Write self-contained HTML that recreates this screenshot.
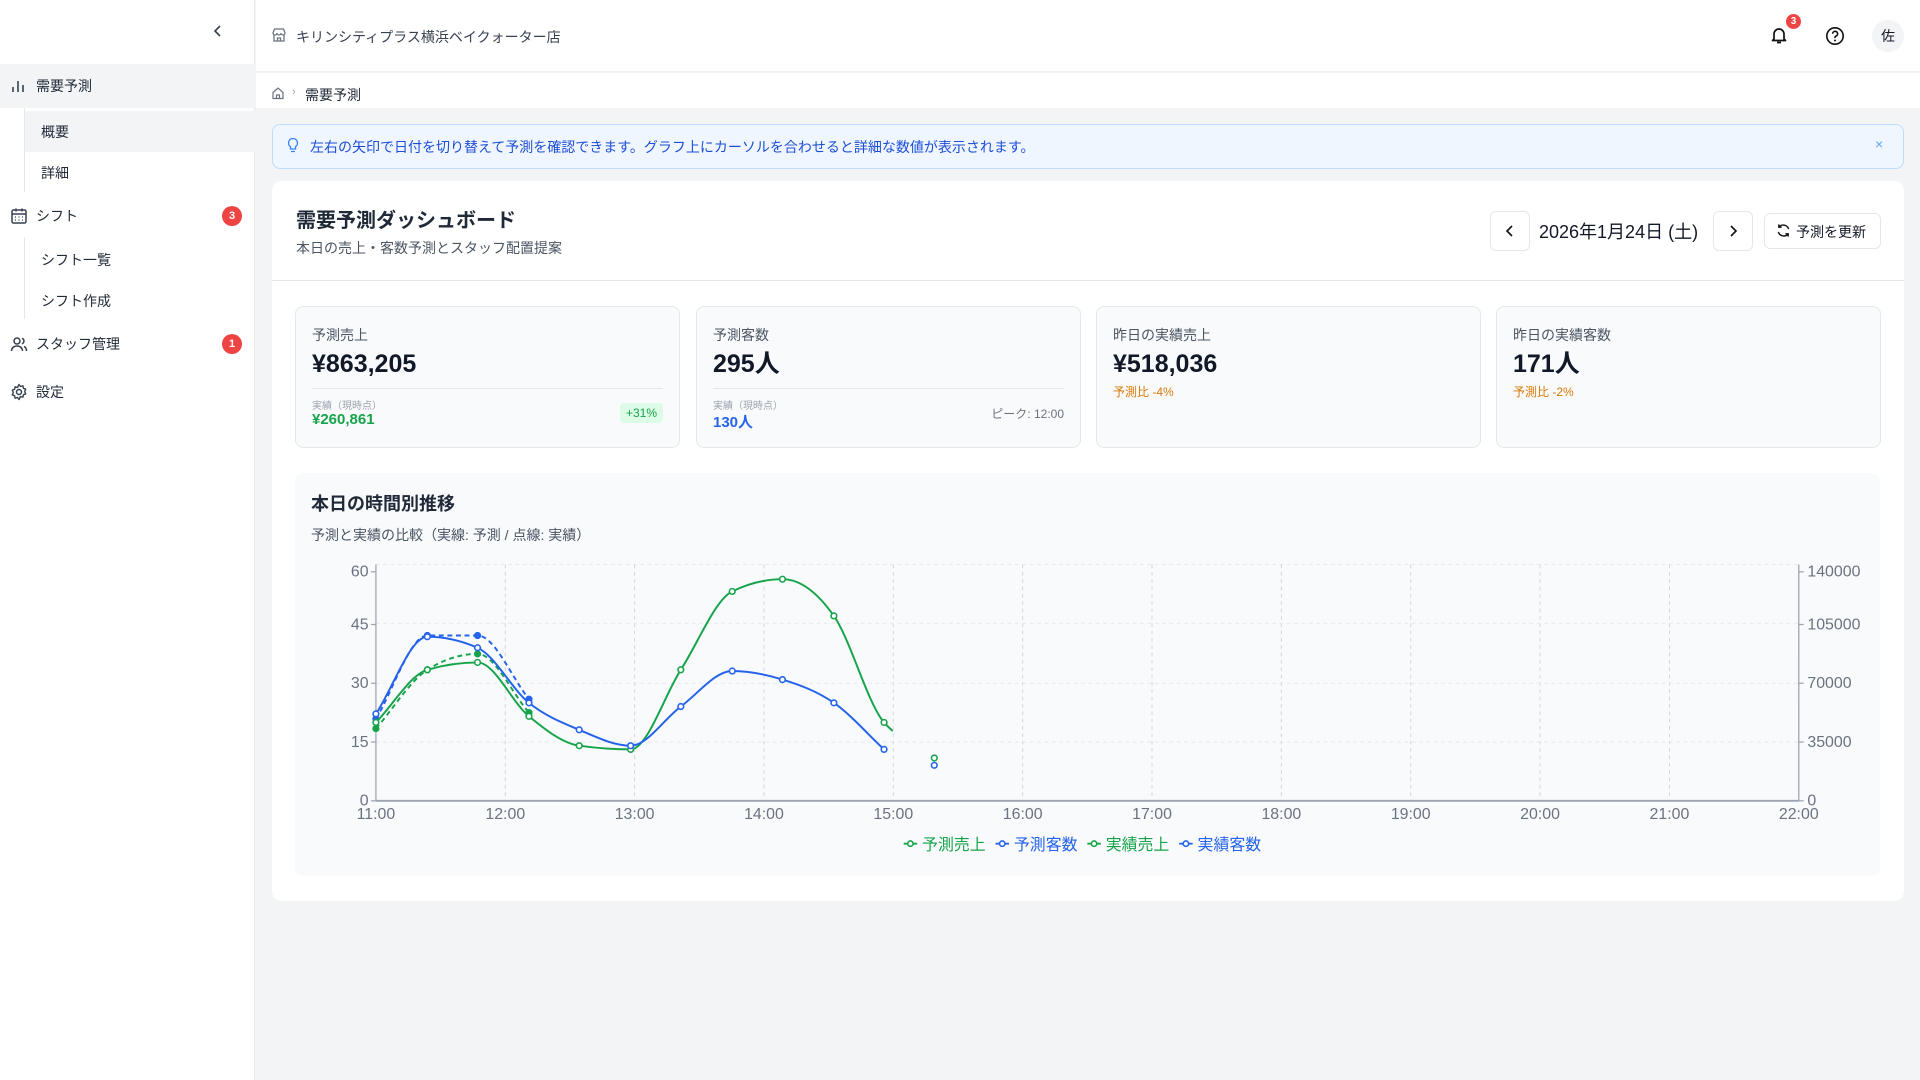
<!DOCTYPE html>
<html><head><meta charset="utf-8">
<style>
*{box-sizing:border-box;margin:0;padding:0}
body{width:1920px;height:1080px;overflow:hidden;background:#f3f4f6;font-family:"Liberation Sans","Noto Sans CJK JP",sans-serif;color:#111827;position:relative}
.abs{position:absolute}
.side{left:0;top:0;width:255px;height:1080px;background:#fff;border-right:1px solid #e5e7eb}
.nav{position:absolute;left:0;width:255px;font-size:14px;color:#1f2937;display:flex;align-items:center}
.nav svg{position:absolute;left:10px}
.nav span{position:absolute;left:36px}
.sub{position:absolute;left:25px;width:230px;font-size:14px;color:#1f2937;display:flex;align-items:center;padding-left:16px}
.badge{position:absolute;left:222px;width:20px;height:20px;border-radius:50%;background:#ef4444;color:#fff;font-size:11px;font-weight:bold;display:flex;align-items:center;justify-content:center}
.stat{position:absolute;top:306px;height:142px;width:385px;background:#f9fafb;border:1px solid #e5e7eb;border-radius:8px;padding:0 16px}
.stat .l{position:absolute;top:18px;left:16px;font-size:14px;color:#4b5563}
.stat .v{position:absolute;top:41px;left:16px;font-size:25px;line-height:32px;font-weight:bold;color:#111827}
.stat .hr{position:absolute;left:16px;right:16px;top:81px;border-top:1px solid #e5e7eb}
.stat .s{position:absolute;top:90px;left:16px;font-size:10px;color:#9ca3af}
.stat .sv{position:absolute;top:104px;left:16px;font-size:15px;font-weight:bold}
.stat .o{position:absolute;top:76px;left:16px;font-size:12px;color:#d97706}
</style></head><body>
<div class="abs side"></div>
<svg class="abs" style="left:210px;top:23px" width="16" height="16" viewBox="0 0 16 16"><path d="M10 3 L5 8 L10 13" fill="none" stroke="#374151" stroke-width="1.6"/></svg>
<div class="nav" style="top:64px;height:44px;background:#f3f4f6">
<svg width="16" height="16" viewBox="0 0 16 16"><path d="M3 14V9M8 14V3M13 14V7" stroke="#374151" stroke-width="1.6" fill="none"/></svg><span>需要予測</span></div>
<div style="position:absolute;left:24px;top:108px;width:1px;height:84px;background:#e5e7eb"></div>
<div class="sub" style="top:111px;height:41px;background:#f3f4f6">概要</div>
<div class="sub" style="top:152px;height:41px">詳細</div>
<div class="nav" style="top:196px;height:40px">
<svg width="18" height="18" viewBox="0 0 18 18"><rect x="2" y="3" width="14" height="13" rx="1.5" fill="none" stroke="#374151" stroke-width="1.5"/><path d="M2 7H16M6 1.5V4.5M12 1.5V4.5" stroke="#374151" stroke-width="1.5"/><path d="M5 10h1M8.5 10h1M12 10h1M5 13h1M8.5 13h1M12 13h1" stroke="#374151" stroke-width="1.2"/></svg><span>シフト</span><div class="badge" style="top:10px">3</div></div>
<div style="position:absolute;left:24px;top:237px;width:1px;height:82px;background:#e5e7eb"></div>
<div class="sub" style="top:239px;height:41px">シフト一覧</div>
<div class="sub" style="top:280px;height:41px">シフト作成</div>
<div class="nav" style="top:324px;height:40px">
<svg width="18" height="18" viewBox="0 0 18 18"><circle cx="7" cy="6" r="3" fill="none" stroke="#374151" stroke-width="1.5"/><path d="M1.5 16c0-3 2.5-5 5.5-5s5.5 2 5.5 5M12 3.2a3 3 0 0 1 0 5.6M14 11.5c1.5.6 2.5 2.3 2.5 4.5" fill="none" stroke="#374151" stroke-width="1.5"/></svg><span>スタッフ管理</span><div class="badge" style="top:10px">1</div></div>
<div class="nav" style="top:372px;height:40px">
<svg width="18" height="18" viewBox="0 0 18 18"><circle cx="9" cy="9" r="2.5" fill="none" stroke="#374151" stroke-width="1.5"/><path d="M9 1.5l1.5 2 2.4-.7.5 2.4 2.3 1-1 2.3 1 2.3-2.3 1-.5 2.4-2.4-.7L9 16.5l-1.5-2-2.4.7-.5-2.4-2.3-1 1-2.3-1-2.3 2.3-1 .5-2.4 2.4.7z" fill="none" stroke="#374151" stroke-width="1.4" stroke-linejoin="round"/></svg><span>設定</span></div>

<div class="abs" style="left:256px;top:0;width:1664px;height:72px;background:#fff;border-bottom:1px solid #f0f1f3"></div>
<svg class="abs" style="left:271px;top:27px" width="16" height="16" viewBox="0 0 16 16"><path d="M2 6L3.5 2h9L14 6c0 1.2-1 2-2 2s-2-.8-2-2c0 1.2-1 2-2 2s-2-.8-2-2c0 1.2-1 2-2 2S2 7.2 2 6zM3 8v6h10V8M6.5 14v-3h3v3" fill="none" stroke="#6b7280" stroke-width="1.3"/></svg>
<div class="abs" style="left:296px;top:27px;font-size:14px;color:#374151">キリンシティプラス横浜ベイクォーター店</div>
<svg class="abs" style="left:1769px;top:25px" width="20" height="20" viewBox="0 0 20 20"><path d="M5 14V9a5 5 0 0 1 10 0v5l1.5 1.5h-13zM8 17.5h4" fill="none" stroke="#111" stroke-width="1.7" stroke-linejoin="round"/></svg>
<div class="abs" style="left:1786px;top:14px;width:15px;height:15px;border-radius:50%;background:#ef4444;color:#fff;font-size:10px;font-weight:bold;display:flex;align-items:center;justify-content:center">3</div>
<svg class="abs" style="left:1825px;top:26px" width="20" height="20" viewBox="0 0 20 20"><circle cx="10" cy="10" r="8.2" fill="none" stroke="#111" stroke-width="1.6"/><path d="M7.6 7.8a2.5 2.5 0 1 1 3.2 2.4c-.6.2-.8.7-.8 1.3v.6" fill="none" stroke="#111" stroke-width="1.6"/><circle cx="10" cy="14.5" r="1" fill="#111"/></svg>
<div class="abs" style="left:1872px;top:20px;width:32px;height:32px;border-radius:50%;background:#f3f4f6;font-size:14px;display:flex;align-items:center;justify-content:center">佐</div>

<div class="abs" style="left:256px;top:73px;width:1664px;height:35px;background:#fff"></div>
<svg class="abs" style="left:271px;top:86px" width="14" height="14" viewBox="0 0 14 14"><path d="M2 6.5L7 2l5 4.5V12.5H2zM5.5 12.5V9h3v3.5" fill="none" stroke="#6b7280" stroke-width="1.2"/></svg>
<div class="abs" style="left:292px;top:86px;font-size:11px;color:#9ca3af">›</div>
<div class="abs" style="left:305px;top:85px;font-size:14px;color:#1f2937">需要予測</div>

<div class="abs" style="left:272px;top:124px;width:1632px;height:45px;background:#eff6ff;border:1px solid #bfdbfe;border-radius:8px"></div>
<svg class="abs" style="left:286px;top:137px" width="14" height="18" viewBox="0 0 14 18"><path d="M7 1.5a4.5 4.5 0 0 0-2.5 8.2V12h5V9.7A4.5 4.5 0 0 0 7 1.5zM5 14.5h4" fill="none" stroke="#3b82f6" stroke-width="1.3"/></svg>
<div class="abs" style="left:310px;top:137px;font-size:14px;color:#1d4ed8">左右の矢印で日付を切り替えて予測を確認できます。グラフ上にカーソルを合わせると詳細な数値が表示されます。</div>
<div class="abs" style="left:1875px;top:136px;font-size:14px;color:#60a5fa">×</div>

<div class="abs" style="left:272px;top:181px;width:1632px;height:720px;background:#fff;border-radius:10px"></div>
<div class="abs" style="left:272px;top:280px;width:1632px;border-top:1px solid #e5e7eb"></div>
<div class="abs" style="left:296px;top:204px;font-size:20px;font-weight:bold;color:#1f2937">需要予測ダッシュボード</div>
<div class="abs" style="left:296px;top:238px;font-size:14px;color:#4b5563">本日の売上・客数予測とスタッフ配置提案</div>
<div class="abs" style="left:1490px;top:211px;width:40px;height:40px;border:1px solid #e5e7eb;border-radius:6px;background:#fff"></div>
<svg class="abs" style="left:1503px;top:223px" width="14" height="16" viewBox="0 0 14 16"><path d="M9 3L4 8l5 5" fill="none" stroke="#111" stroke-width="1.6"/></svg>
<div class="abs" style="left:1539px;top:218px;font-size:18px;color:#111827">2026年1月24日 (土)</div>
<div class="abs" style="left:1713px;top:211px;width:40px;height:40px;border:1px solid #e5e7eb;border-radius:6px;background:#fff"></div>
<svg class="abs" style="left:1726px;top:223px" width="14" height="16" viewBox="0 0 14 16"><path d="M5 3l5 5-5 5" fill="none" stroke="#111" stroke-width="1.6"/></svg>
<div class="abs" style="left:1764px;top:213px;width:117px;height:36px;border:1px solid #e5e7eb;border-radius:6px;background:#fff"></div>
<svg class="abs" style="left:1776px;top:223px" width="15" height="15" viewBox="0 0 16 16"><path d="M13.5 6.5A6 6 0 0 0 3 4.5M2.5 9.5A6 6 0 0 0 13 11.5M3 1.5v3h3M13 14.5v-3h-3" fill="none" stroke="#111" stroke-width="1.5"/></svg>
<div class="abs" style="left:1796px;top:222px;font-size:14px;color:#111827">予測を更新</div>

<div class="stat" style="left:295px"><div class="l">予測売上</div><div class="v">¥863,205</div><div class="hr"></div><div class="s">実績（現時点）</div><div class="sv" style="color:#16a34a">¥260,861</div><div class="abs" style="right:16px;top:96px;background:#dcfce7;color:#16a34a;font-size:12px;padding:3px 6px;border-radius:4px">+31%</div></div>
<div class="stat" style="left:696px"><div class="l">予測客数</div><div class="v">295人</div><div class="hr"></div><div class="s">実績（現時点）</div><div class="sv" style="color:#2563eb">130人</div><div class="abs" style="right:16px;top:98px;color:#6b7280;font-size:12px">ピーク: 12:00</div></div>
<div class="stat" style="left:1096px"><div class="l">昨日の実績売上</div><div class="v">¥518,036</div><div class="o" style="top:76px">予測比 -4%</div></div>
<div class="stat" style="left:1496px"><div class="l">昨日の実績客数</div><div class="v">171人</div><div class="o" style="top:76px">予測比 -2%</div></div>

<div class="abs" style="left:295px;top:473px;width:1585px;height:403px;background:#f8fafc;border-radius:8px"></div>
<div class="abs" style="left:311px;top:490px;font-size:18px;font-weight:bold;color:#1f2937">本日の時間別推移</div>
<div class="abs" style="left:311px;top:525px;font-size:14px;color:#4b5563">予測と実績の比較（実線: 予測 / 点線: 実績）</div>

<svg id="ch" class="abs" style="left:0;top:0" width="1920" height="1080" viewBox="0 0 1568 882" font-family="Liberation Sans, sans-serif"></svg>
<script>
var s='';
var L=307,R=1469,T=461,B=654,H=(R-L)/11;
for(var i=1;i<=11;i++){var x=L+i*H;s+='<line x1="'+x+'" y1="'+T+'" x2="'+x+'" y2="'+B+'" stroke="#d1d5db" stroke-dasharray="3 3" stroke-width="0.8"/>';}
[461,509,558,606].forEach(function(y){s+='<line x1="'+L+'" y1="'+y+'" x2="'+R+'" y2="'+y+'" stroke="#e5e7eb" stroke-dasharray="3 3" stroke-width="0.8"/>';});
s+='<line x1="'+L+'" y1="'+T+'" x2="'+L+'" y2="'+B+'" stroke="#9ca3af"/><line x1="'+R+'" y1="'+T+'" x2="'+R+'" y2="'+B+'" stroke="#9ca3af"/><line x1="'+L+'" y1="'+B+'" x2="'+R+'" y2="'+B+'" stroke="#9ca3af" stroke-width="1.5"/>';
var ly=[[60,467],[45,510],[30,558],[15,606],[0,654]],ry=['140000','105000','70000','35000','0'];
ly.forEach(function(a,k){s+='<text x="301" y="'+(a[1]+4)+'" text-anchor="end" font-size="13" fill="#6b7280">'+a[0]+'</text>';s+='<text x="1476" y="'+(a[1]+4)+'" font-size="13" fill="#6b7280">'+ry[k]+'</text>';s+='<line x1="303" x2="307" y1="'+a[1]+'" y2="'+a[1]+'" stroke="#9ca3af"/><line x1="1469" x2="1473" y1="'+a[1]+'" y2="'+a[1]+'" stroke="#9ca3af"/>';});
for(var i=0;i<=11;i++){var x=L+i*H;s+='<text x="'+x+'" y="669" text-anchor="middle" font-size="13" fill="#6b7280">'+(11+i)+':00</text>';}
function path(p){var n=p.length,m=[],d=[];for(var i=0;i<n-1;i++)d.push((p[i+1][1]-p[i][1])/(p[i+1][0]-p[i][0]));
for(var i=0;i<n;i++){if(i==0)m.push(d[0]);else if(i==n-1)m.push(d[n-2]);else{if(d[i-1]*d[i]<=0)m.push(0);else{var h0=p[i][0]-p[i-1][0],h1=p[i+1][0]-p[i][0];var t=(d[i-1]*h1+d[i]*h0)/(h0+h1);var sg=Math.min(Math.abs(d[i-1]),Math.abs(d[i]),0.5*Math.abs(t))*2;m.push(Math.sign(t)*Math.min(Math.abs(t),sg));}}}
var r='M'+p[0][0]+','+p[0][1];for(var i=0;i<n-1;i++){var h=(p[i+1][0]-p[i][0])/3;r+=' C'+(p[i][0]+h)+','+(p[i][1]+m[i]*h)+' '+(p[i+1][0]-h)+','+(p[i+1][1]-m[i+1]*h)+' '+p[i+1][0]+','+p[i+1][1];}return r;}
function ser(p,c,dash,fill,n){s+='<path d="'+path(p)+'" fill="none" stroke="'+c+'" stroke-width="1.6"'+(dash?' stroke-dasharray="4 3"':'')+'/>';p.slice(0,n||p.length).forEach(function(q){s+='<circle cx="'+q[0]+'" cy="'+q[1]+'" r="2.3" fill="'+(fill?c:'#fff')+'" stroke="'+c+'" stroke-width="1.3"/>';});}
var G='#16a34a',Bl='#2563eb';
ser([[307,595],[349,547],[390,534],[432,582]],G,true,true);
ser([[307,587],[349,519],[390,519],[432,571]],Bl,true,true);
ser([[307,590],[349,547],[390,541],[432,585],[473,609],[515,612],[556,547],[598,483],[639,473],[681,503],[722,590],[729,597]],G,false,false,11);
ser([[307,583],[349,520],[390,529],[432,574],[473,596],[515,609],[556,577],[598,548],[639,555],[681,574],[722,612]],Bl,false,false);
s+='<circle cx="763" cy="619" r="2.3" fill="#fff" stroke="'+G+'" stroke-width="1.3"/><circle cx="763" cy="625" r="2.3" fill="#fff" stroke="'+Bl+'" stroke-width="1.3"/>';
var lg=[[738,G,'予測売上'],[813,Bl,'予測客数'],[888,G,'実績売上'],[963,Bl,'実績客数']];
lg.forEach(function(a){s+='<line x1="'+a[0]+'" x2="'+(a[0]+11)+'" y1="689" y2="689" stroke="'+a[1]+'" stroke-width="1.5"/><circle cx="'+(a[0]+5.5)+'" cy="689" r="2.2" fill="#fff" stroke="'+a[1]+'" stroke-width="1.3"/><text x="'+(a[0]+15)+'" y="694" font-size="13" fill="'+a[1]+'" font-family="Liberation Sans, Noto Sans CJK JP, sans-serif">'+a[2]+'</text>';});
document.getElementById('ch').innerHTML=s;
</script>
</body></html>
